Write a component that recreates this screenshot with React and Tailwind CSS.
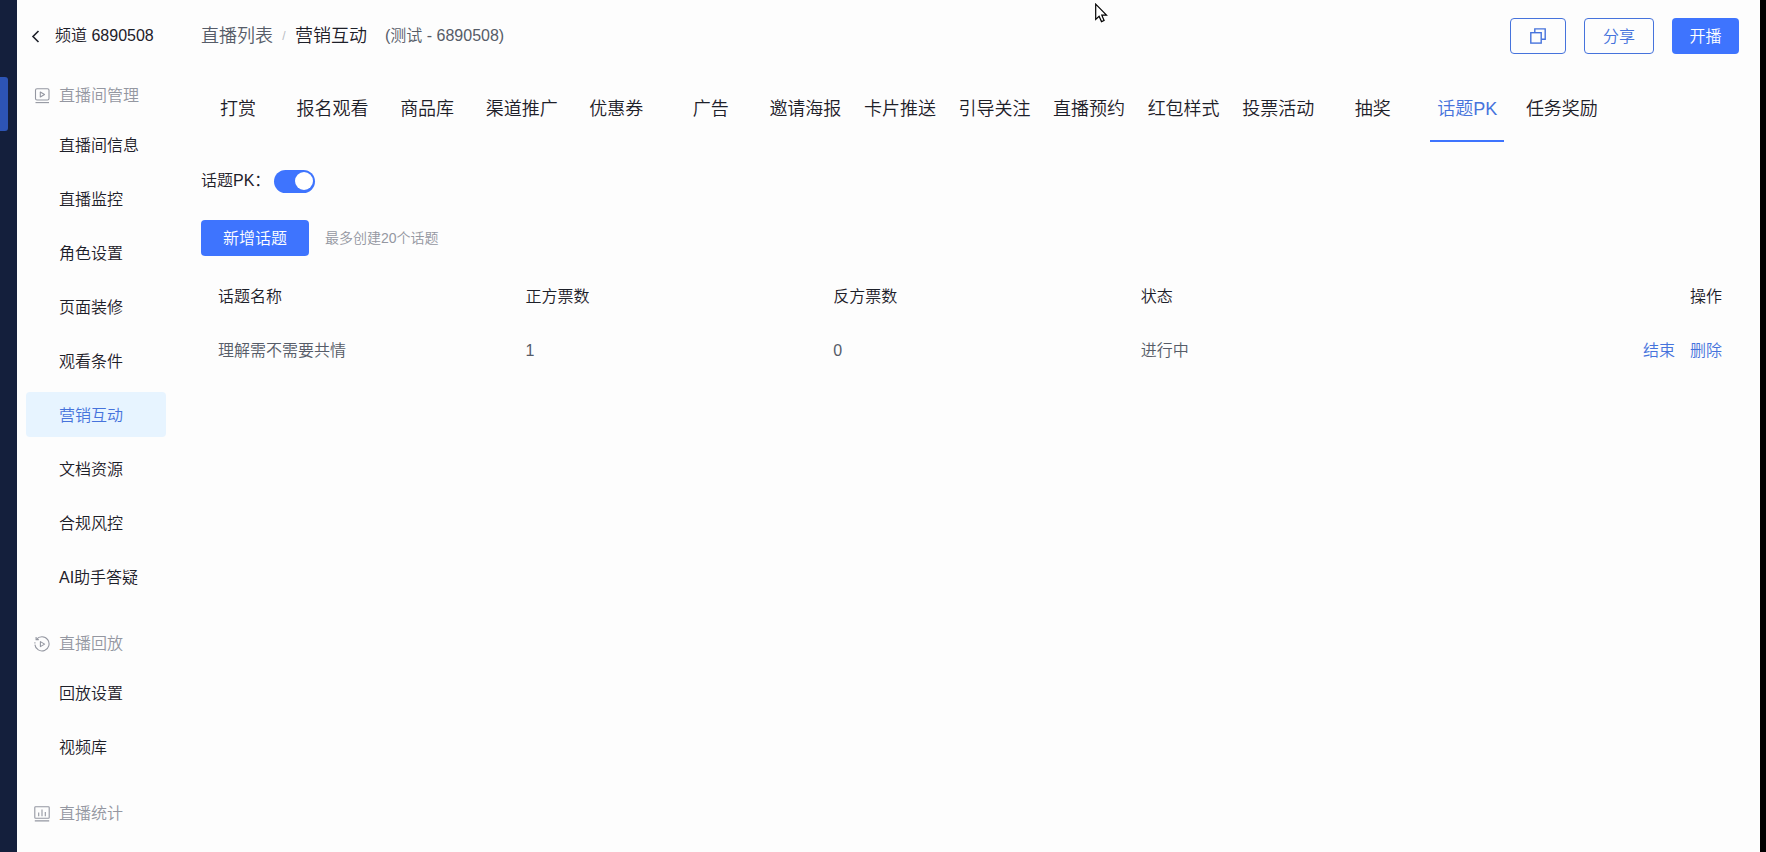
import React, { useState } from 'react';

const MENU = [
    {
        title: '直播间管理',
        icon: 'room',
        items: ['直播间信息', '直播监控', '角色设置', '页面装修', '观看条件', '营销互动', '文档资源', '合规风控', 'AI助手答疑'],
    },
    { title: '直播回放', icon: 'replay', items: ['回放设置', '视频库'] },
    { title: '直播统计', icon: 'stats', items: [] },
];

const TABS = [
    '打赏', '报名观看', '商品库', '渠道推广', '优惠券', '广告', '邀请海报', '卡片推送',
    '引导关注', '直播预约', '红包样式', '投票活动', '抽奖', '话题PK', '任务奖励',
];

const TOPICS = [{ id: 1, name: '理解需不需要共情', pros: 1, cons: 0, status: '进行中' }];

function SectionIcon({ type }) {
    return (
        <svg className="w-4 h-4 shrink-0" viewBox="0 0 16 16" fill="none" stroke="currentColor" strokeWidth="1.1" aria-hidden="true">
            {type === 'room' && (
                <>
                    <rect x="1.5" y="0.8" width="13.5" height="11.2" rx="1.5" />
                    <path d="M6.3 4v5l4.2-2.5z" strokeLinejoin="round" />
                    <path d="M1.5 14.6h13.5" />
                </>
            )}
            {type === 'replay' && (
                <>
                    <path d="M2.4 3.4A7.1 7.1 0 1 1 .9 8.6M.9 7.4V6.2" />
                    <path d="M2.1 1v2.6h2.7" />
                    <path d="M6.4 5.6v5l4.2-2.5z" strokeLinejoin="round" />
                </>
            )}
            {type === 'stats' && (
                <>
                    <rect x="0.8" y="0.8" width="14.4" height="11.4" rx="0.8" />
                    <path d="M4.7 6.5v3.7M8 3.6v6.6M11.3 6v4.2M.8 14.9h14.4" />
                </>
            )}
        </svg>
    );
}

function Sidebar({ active, onSelect }) {
    return (
        <aside className="w-[158px] shrink-0 pl-[9px] pr-[9px]">
            <button type="button" className="flex items-center h-[36px] mt-[18px] pl-[5px] text-[16px] whitespace-nowrap">
                <svg className="w-[9px] h-[13px] mr-[15px]" viewBox="0 0 9 13" fill="none" stroke="currentColor" strokeWidth="1.6" aria-hidden="true">
                    <path d="M7.5 1L2 6.5 7.5 12" />
                </svg>
                频道 6890508
            </button>
            <nav className="flex flex-col gap-[22px] mt-[19px]">
                {MENU.map((section) => (
                    <div key={section.title}>
                        <h2 className="flex items-center h-[44px] pt-[2px] pl-[8px] gap-[9px] text-[16px] text-[#9497a1] mb-[5px]">
                            <SectionIcon type={section.icon} />
                            {section.title}
                        </h2>
                        <ul className="flex flex-col gap-[9px]">
                            {section.items.map((item) => (
                                <li key={item}>
                                    <button
                                        type="button"
                                        onClick={() => onSelect(item)}
                                        className={`w-full h-[45px] pt-[2px] pl-[33px] rounded-[4px] text-left text-[16px] whitespace-nowrap ${
                                            item === active ? 'bg-[#e7f4ff] text-[#4673dc]' : ''
                                        }`}
                                    >
                                        {item}
                                    </button>
                                </li>
                            ))}
                        </ul>
                    </div>
                ))}
            </nav>
        </aside>
    );
}

function Header() {
    return (
        <header className="flex items-center justify-between h-[36px] mt-[18px]">
            <div className="flex items-center text-[18px] whitespace-nowrap">
                <a href="#list" className="text-[#565c68]">直播列表</a>
                <span className="w-[22px] text-center text-[12px] text-[#b9bcc4]">/</span>
                <span>营销互动</span>
                <span className="ml-[18px] text-[16px] text-[#565c68]">(测试 - 6890508)</span>
            </div>
            <div className="flex gap-[18px] text-[16px]">
                <button type="button" aria-label="复制" className="flex items-center justify-center w-[56px] h-[36px] rounded-[4px] border border-[#4673dc] text-[#4673dc]">
                    <svg className="w-4 h-4" viewBox="0 0 16 16" fill="none" stroke="currentColor" strokeWidth="1.4" aria-hidden="true">
                        <rect x="0.8" y="4.7" width="10.4" height="10.4" />
                        <path d="M4.8 4.5V.9h10.4v10.3h-3.8" />
                    </svg>
                </button>
                <button type="button" className="w-[70px] h-[36px] pt-[2px] rounded-[4px] border border-[#4673dc] text-[#4673dc]">分享</button>
                <button type="button" className="w-[67px] h-[36px] pt-[2px] rounded-[4px] bg-[#3e74fe] text-white">开播</button>
            </div>
        </header>
    );
}

function Tabs({ active, onSelect }) {
    return (
        <div role="tablist" className="flex justify-between max-w-[1398px] mt-[41px]">
            {TABS.map((tab) => (
                <button
                    key={tab}
                    type="button"
                    role="tab"
                    aria-selected={tab === active}
                    onClick={() => onSelect(tab)}
                    className={`w-[74px] pb-[17px] border-b-2 text-[18px] leading-[28px] whitespace-nowrap ${
                        tab === active ? 'border-[#3e74fe] text-[#4673dc]' : 'border-transparent'
                    }`}
                >
                    {tab}
                </button>
            ))}
        </div>
    );
}

function TopicTable() {
    return (
        <table className="w-full table-fixed mt-[14px] text-[16px] text-left">
            <thead>
                <tr className="h-[54px]">
                    <th className="px-[17px] font-[350]">话题名称</th>
                    <th className="px-[17px] font-[350]">正方票数</th>
                    <th className="px-[17px] font-[350]">反方票数</th>
                    <th className="px-[17px] font-[350]">状态</th>
                    <th className="px-[17px] font-[350] text-right">操作</th>
                </tr>
            </thead>
            <tbody>
                {TOPICS.map((topic) => (
                    <tr key={topic.id} className="h-[53px] text-[#565c68]">
                        <td className="px-[17px]">{topic.name}</td>
                        <td className="px-[17px]">{topic.pros}</td>
                        <td className="px-[17px]">{topic.cons}</td>
                        <td className="px-[17px]">{topic.status}</td>
                        <td className="px-[17px]">
                            <div className="flex justify-end gap-[15px] text-[#4673dc]">
                                <button type="button">结束</button>
                                <button type="button">删除</button>
                            </div>
                        </td>
                    </tr>
                ))}
            </tbody>
        </table>
    );
}

export default function App() {
    const [menu, setMenu] = useState('营销互动');
    const [tab, setTab] = useState('话题PK');
    const [enabled, setEnabled] = useState(true);

    return (
        <div className="relative flex min-h-screen bg-[#fdfdfd] text-[#1d2029] font-[350] font-['Liberation_Sans','Noto_Sans_CJK_SC',sans-serif]">
            <div className="w-[17px] shrink-0 bg-[#141f3c] pt-[77px]">
                <div className="w-[8px] h-[54px] rounded-r-[3px] bg-[#2d54b5]"></div>
            </div>

            <Sidebar active={menu} onSelect={setMenu} />

            <main className="flex-1 min-w-0 pl-[26px] pr-[21px]">
                <Header />
                <Tabs active={tab} onSelect={setTab} />

                <label className="flex items-center w-fit h-[24px] mt-[27px] text-[16px]">
                    话题PK：
                    <input
                        type="checkbox"
                        role="switch"
                        checked={enabled}
                        onChange={(e) => setEnabled(e.target.checked)}
                        className="peer sr-only"
                    />
                    <span className="flex items-center justify-start peer-checked:justify-end w-[41px] h-[23px] ml-[4px] px-[2px] rounded-full bg-gray-300 peer-checked:bg-[#3e74fe]">
                        <span className="w-[18px] h-[18px] rounded-full bg-white"></span>
                    </span>
                </label>

                <div className="flex items-center mt-[27px]">
                    <button type="button" className="w-[108px] h-[36px] pt-[2px] rounded-[4px] bg-[#3e74fe] text-[16px] text-white">新增话题</button>
                    <span className="ml-[16px] text-[14px] text-[#9497a1]">最多创建20个话题</span>
                </div>

                <TopicTable />
            </main>

            <div className="w-[6px] shrink-0 bg-black"></div>

            {/* mouse pointer */}
            <svg className="absolute left-[1095px] top-[3px] w-[13px] h-[20px]" viewBox="0 0 13 20" fill="white" stroke="black" strokeWidth="1.2" aria-hidden="true">
                <path d="M.7 1.2v15.2l3.4-3.2 2.4 5.4 2.6-1.1-2.3-5.3h4.7z" />
            </svg>
        </div>
    );
}
